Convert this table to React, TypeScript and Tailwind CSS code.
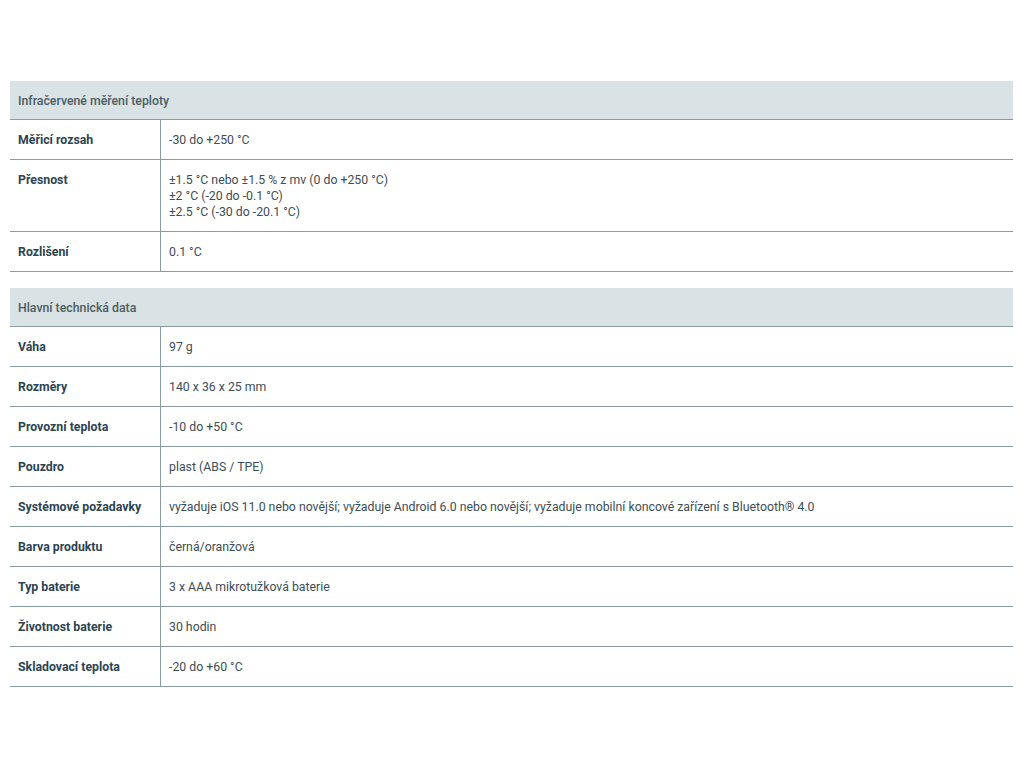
import React from "react";

type Row = { label: string; value: string[] };
type Section = { title: string; rows: Row[] };

const sections: Section[] = [
  {
    title: "Infračervené měření teploty",
    rows: [
      { label: "Měřicí rozsah", value: ["-30 do +250 °C"] },
      {
        label: "Přesnost",
        value: ["±1.5 °C nebo ±1.5 % z mv (0 do +250 °C)", "±2 °C (-20 do -0.1 °C)", "±2.5 °C (-30 do -20.1 °C)"],
      },
      { label: "Rozlišení", value: ["0.1 °C"] },
    ],
  },
  {
    title: "Hlavní technická data",
    rows: [
      { label: "Váha", value: ["97 g"] },
      { label: "Rozměry", value: ["140 x 36 x 25 mm"] },
      { label: "Provozní teplota", value: ["-10 do +50 °C"] },
      { label: "Pouzdro", value: ["plast (ABS / TPE)"] },
      {
        label: "Systémové požadavky",
        value: ["vyžaduje iOS 11.0 nebo novější; vyžaduje Android 6.0 nebo novější; vyžaduje mobilní koncové zařízení s Bluetooth® 4.0"],
      },
      { label: "Barva produktu", value: ["černá/oranžová"] },
      { label: "Typ baterie", value: ["3 x AAA mikrotužková baterie"] },
      { label: "Životnost baterie", value: ["30 hodin"] },
      { label: "Skladovací teplota", value: ["-20 do +60 °C"] },
    ],
  },
];

function SpecTable({ section }: { section: Section }) {
  return (
    <div className="w-full">
      <div className="bg-[#d9e2e5] border-b border-[#8a9ca3] px-2 pt-[12px] pb-[10px] text-[12.3px] leading-4 font-medium text-[#4c5c63]">
        {section.title}
      </div>
      {section.rows.map((row) => (
        <div key={row.label} className="flex border-b border-[#8a9ca3] text-[12.3px] leading-4">
          <div className="w-[151px] shrink-0 border-r border-[#8a9ca3] px-2 pt-3 pb-[11px] font-bold text-[#2c4452]">
            {row.label}
          </div>
          <div className="flex-1 px-2 pt-3 pb-[11px] text-[#3d4d55]">
            {row.value.map((v) => (
              <div key={v}>{v}</div>
            ))}
          </div>
        </div>
      ))}
    </div>
  );
}

export default function App() {
  return (
    <div className="min-h-[768px] bg-white pt-[81px] pl-[10px] pr-[11px]" style={{ fontFamily: "Roboto, 'Liberation Sans', sans-serif" }}>
      <div className="flex flex-col gap-[16px]">
        {sections.map((s) => (
          <SpecTable key={s.title} section={s} />
        ))}
      </div>
    </div>
  );
}
